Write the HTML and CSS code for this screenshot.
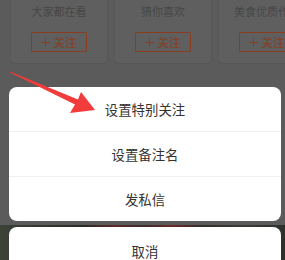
FILE: index.html
```html
<!DOCTYPE html>
<html lang="zh-CN">
<head>
  <meta charset="UTF-8">
  <meta name="viewport" content="width=device-width, initial-scale=1.0">
  <title>关注</title>
  <link rel="stylesheet" href="styles.css">
</head>
<body>
  <!-- page behind the mask -->
  <div class="page">
    <div class="cards">
      <div class="card">
        <p class="card-title">大家都在看</p>
        <button class="follow-btn"><span class="plus"></span>关注</button>
      </div>
      <div class="card">
        <p class="card-title">猜你喜欢</p>
        <button class="follow-btn"><span class="plus"></span>关注</button>
      </div>
      <div class="card">
        <p class="card-title">美食优质作者</p>
        <button class="follow-btn"><span class="plus"></span>关注</button>
      </div>
    </div>
    <h2 class="section-title">关注人的动态列表</h2>
    <div class="photo"></div>
  </div>

  <!-- action sheet -->
  <div class="sheet">
    <div class="sheet-group">
      <div class="sheet-item">设置特别关注</div>
      <div class="sheet-item">设置备注名</div>
      <div class="sheet-item">发私信</div>
    </div>
    <div class="sheet-group cancel">
      <div class="sheet-item">取消</div>
    </div>
  </div>

  <svg class="arrow" width="285" height="260" viewBox="0 0 285 260">
    <polygon points="10,71.5 78,99.5 81,92 95,110 70,113 75,104.5 10,72.5" fill="#f23b3b"/>
  </svg>
</body>
</html>
```

FILE: styles.css
```css
* {
  box-sizing: border-box;
}
body {
  margin: 0;
  font-family: "Noto Sans CJK SC", "Noto Sans", sans-serif;
  background: #5b5b5b;
  height: 260px;
  overflow: hidden;
  position: relative;
}
.page {
  display: flex;
  flex-direction: column;
}
.cards {
  display: flex;
  gap: 6px;
  margin-top: -10px;
  padding-left: 10px;
  overflow: hidden;
  white-space: nowrap;
}
.card {
  flex: 0 0 98px;
  display: flex;
  flex-direction: column;
  align-items: center;
  padding: 13px 0 11px;
  background: #5f5f5f;
  border: 1px solid #575757;
  border-radius: 5px;
}
.card-title {
  margin: 0;
  font-size: 11px;
  line-height: 14px;
  color: #474747;
}
.follow-btn {
  margin-top: 14px;
  width: 56px;
  height: 20px;
  padding: 0;
  display: flex;
  align-items: center;
  justify-content: center;
  border: 1px solid #8a3c1c;
  border-radius: 2px;
  background: transparent;
  color: #8a3c1c;
  font-family: inherit;
  font-size: 11.5px;
  line-height: 18px;
}
.plus {
  position: relative;
  width: 8px;
  height: 8px;
  margin-right: 4px;
}
.plus::before,
.plus::after {
  content: "";
  position: absolute;
  background: #8a3c1c;
}
.plus::before {
  left: 0;
  top: 3.5px;
  width: 8px;
  height: 1px;
}
.plus::after {
  left: 3.5px;
  top: 0;
  width: 1px;
  height: 8px;
}
.section-title {
  margin: 21px 0 0 20px;
  font-size: 16px;
  line-height: 20px;
  font-weight: bold;
  color: #262626;
}
.photo {
  margin-top: 120px;
  height: 40px;
  background: linear-gradient(to right, #3d4339 0%, #34372f 12%, #2c2a28 30%, #5b2a29 40%, #3a2c2a 50%, #6a2a28 60%, #342c2a 70%, #3a3a36 85%, #2e302c 100%);
}
.sheet {
  position: absolute;
  top: 87px;
  left: 9px;
  width: 272px;
  display: flex;
  flex-direction: column;
  gap: 6px;
}
.sheet-group {
  background: #fff;
  border-radius: 8px;
  overflow: hidden;
}
.sheet-item {
  height: 45px;
  display: flex;
  align-items: center;
  justify-content: center;
  font-size: 13.4px;
  color: #333;
  border-top: 1px solid #f0f0f0;
}
.sheet-item:first-child {
  height: 44px;
  border-top: none;
}
.cancel .sheet-item {
  height: 48px;
}
.arrow {
  position: absolute;
  top: 0;
  left: 0;
}
```
